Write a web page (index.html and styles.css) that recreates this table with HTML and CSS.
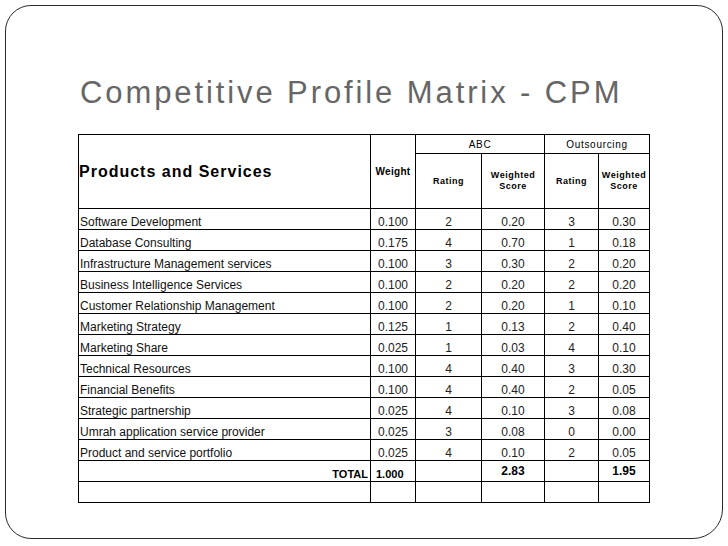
FILE: index.html
```html
<!DOCTYPE html>
<html>
<head>
<meta charset="utf-8">
<link rel="stylesheet" href="styles.css">
</head>
<body>
<div class="slide">
  <h1 class="title">Competitive Profile Matrix - CPM</h1>
  <table class="cpm">
    <colgroup>
      <col class="c-name"><col class="c-weight"><col class="c-r1"><col class="c-w1"><col class="c-r2"><col class="c-w2">
    </colgroup>
    <thead>
      <tr class="h1">
        <th rowspan="2" class="prod">Products and Services</th>
        <th rowspan="2" class="small wt">Weight</th>
        <th colspan="2" class="group">ABC</th>
        <th colspan="2" class="group">Outsourcing</th>
      </tr>
      <tr class="h2">
        <th class="small">Rating</th>
        <th class="small">Weighted<br>Score</th>
        <th class="small">Rating</th>
        <th class="small">Weighted<br>Score</th>
      </tr>
    </thead>
    <tbody>
      <tr><td class="name">Software Development</td><td>0.100</td><td>2</td><td>0.20</td><td>3</td><td>0.30</td></tr>
      <tr><td class="name">Database Consulting</td><td>0.175</td><td>4</td><td>0.70</td><td>1</td><td>0.18</td></tr>
      <tr><td class="name">Infrastructure Management services</td><td>0.100</td><td>3</td><td>0.30</td><td>2</td><td>0.20</td></tr>
      <tr><td class="name">Business Intelligence Services</td><td>0.100</td><td>2</td><td>0.20</td><td>2</td><td>0.20</td></tr>
      <tr><td class="name">Customer Relationship Management</td><td>0.100</td><td>2</td><td>0.20</td><td>1</td><td>0.10</td></tr>
      <tr><td class="name">Marketing Strategy</td><td>0.125</td><td>1</td><td>0.13</td><td>2</td><td>0.40</td></tr>
      <tr><td class="name">Marketing Share</td><td>0.025</td><td>1</td><td>0.03</td><td>4</td><td>0.10</td></tr>
      <tr><td class="name">Technical Resources</td><td>0.100</td><td>4</td><td>0.40</td><td>3</td><td>0.30</td></tr>
      <tr><td class="name">Financial Benefits</td><td>0.100</td><td>4</td><td>0.40</td><td>2</td><td>0.05</td></tr>
      <tr><td class="name">Strategic partnership</td><td>0.025</td><td>4</td><td>0.10</td><td>3</td><td>0.08</td></tr>
      <tr><td class="name">Umrah application service provider</td><td>0.025</td><td>3</td><td>0.08</td><td>0</td><td>0.00</td></tr>
      <tr><td class="name">Product and service portfolio</td><td>0.025</td><td>4</td><td>0.10</td><td>2</td><td>0.05</td></tr>
      <tr class="total"><td class="name tlabel">TOTAL</td><td class="tweight">1.000</td><td></td><td class="tscore">2.83</td><td></td><td class="tscore">1.95</td></tr>
      <tr class="empty"><td></td><td></td><td></td><td></td><td></td><td></td></tr>
    </tbody>
  </table>
</div>
</body>
</html>
```
FILE: styles.css
```css
html, body {
  margin: 0;
  padding: 0;
  background: #ffffff;
}
.slide {
  box-sizing: border-box;
  margin: 5px 0 0 5px;
  width: 718px;
  height: 534px;
  border: 1.5px solid #2a2a2a;
  border-radius: 26px 26px 30px 26px;
  padding: 0 0 0 72px;
}
.title {
  margin: 67px 0 0 2px;
  height: 61px;
  font-family: "Liberation Sans", Arial, sans-serif;
  font-weight: normal;
  font-size: 31px;
  line-height: 40px;
  color: #666666;
  letter-spacing: 2.9px;
}
.cpm {
  border-collapse: collapse;
  table-layout: fixed;
  width: 571px;
  font-family: "Liberation Sans", Arial, sans-serif;
  color: #1a1a1a;
}
.c-name { width: 292px; }
.c-weight { width: 45px; }
.c-r1 { width: 66px; }
.c-w1 { width: 63px; }
.c-r2 { width: 54px; }
.c-w2 { width: 51px; }
.cpm th, .cpm td {
  border: 1px solid #000;
  padding: 0;
}
.cpm th {
  color: #000;
}
.h1 th { height: 18px; }
.h2 th { height: 54px; }
.prod {
  text-align: left;
  font-size: 16px;
  font-weight: bold;
  letter-spacing: 1px;
  padding-left: 1px;
}
.small {
  font-size: 9px;
  font-weight: bold;
  letter-spacing: 0.5px;
  line-height: 11px;
}
.cpm .wt {
  font-size: 10px;
  letter-spacing: 0.3px;
}
.group {
  font-size: 10px;
  font-weight: normal;
  letter-spacing: 0.7px;
}
.cpm td {
  height: 20px;
  font-size: 12px;
  text-align: center;
  vertical-align: bottom;
  padding-bottom: 0;
  line-height: 13px;
  color: #222;
}
.cpm td.name {
  text-align: left;
  font-size: 12px;
  padding-left: 1px;
  color: #111;
}
.total td { font-weight: bold; }
.cpm .total td { color: #000; }
.cpm td.tlabel {
  text-align: right;
  font-size: 11px;
  padding-right: 2px;
}
.cpm td.tweight {
  text-align: left;
  padding-left: 5px;
  font-size: 11px;
}
.cpm td.tscore {
  font-size: 12px;
  vertical-align: middle;
}
```
